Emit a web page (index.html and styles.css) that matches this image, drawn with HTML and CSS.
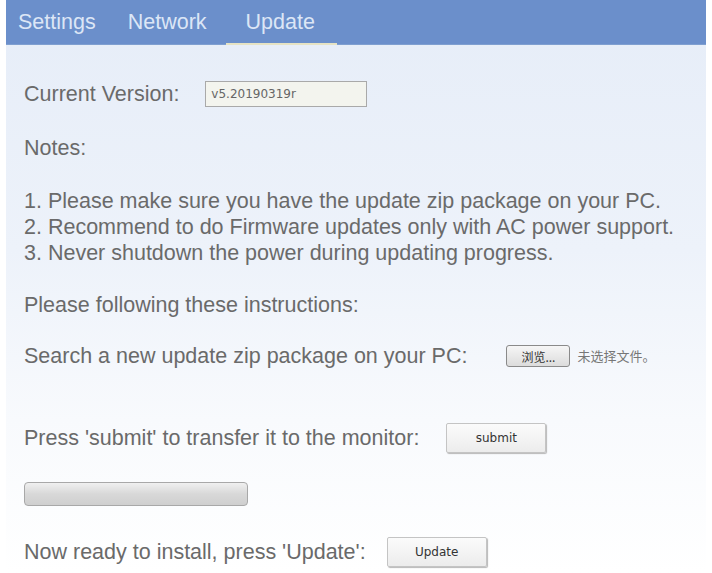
FILE: index.html
```html
<!DOCTYPE html>
<html lang="en">
<head>
    <meta charset="UTF-8">
    <meta name="viewport" content="width=device-width, initial-scale=1.0">
    <title>Update</title>
    <link rel="stylesheet" href="styles.css">
</head>
<body>
<div class="panel">
    <div class="tabs">
        <a href="#" class="tab">Settings</a>
        <a href="#" class="tab">Network</a>
        <a href="#" class="tab active">Update</a>
    </div>
    <div class="content">
        <div class="row version-row">
            <span>Current Version:</span>
            <input class="version" type="text" value="v5.20190319r" readonly>
        </div>
        <p class="notes-title">Notes:</p>
        <ol class="notes">
            <li>1. Please make sure you have the update zip package on your PC.</li>
            <li>2. Recommend to do Firmware updates only with AC power support.</li>
            <li>3. Never shutdown the power during updating progress.</li>
        </ol>
        <p class="instr">Please following these instructions:</p>
        <div class="row search-row">
            <span>Search a new update zip package on your PC:</span>
            <span class="file-pick">
                <button class="browse">浏览...</button>
                <span class="no-file">未选择文件。</span>
            </span>
        </div>
        <div class="row submit-row">
            <span>Press 'submit' to transfer it to the monitor:</span>
            <button class="btn submit">submit</button>
        </div>
        <div class="progress"></div>
        <div class="row update-row">
            <span>Now ready to install, press 'Update':</span>
            <button class="btn update">Update</button>
        </div>
    </div>
</div>
</body>
</html>
```

FILE: styles.css
```css
body {
    margin: 0;
    background: #ffffff;
    font-family: "Liberation Sans", Arial, sans-serif;
}
.panel {
    margin: 0 6px;
    height: 573px;
    background: linear-gradient(to bottom, #e6edf8 0px, #edf2fa 250px, #f8fafd 420px, #ffffff 573px);
}
.tabs {
    height: 44px;
    background-color: #6b8fcb;
    display: flex;
    padding-left: 12px;
    border-bottom: 1px solid #7f9fd0;
}
.tab {
    color: #dce6f6;
    text-decoration: none;
    font-size: 21.5px;
    line-height: 44px;
    margin-right: 32px;
}
.tab.active {
    padding: 0 22px 0 20px;
    margin-left: -13px;
    border-bottom: 2px solid #e6e3c4;
    height: 43px;
}
.content {
    padding: 36px 0 0 18px;
    color: #6a6a6a;
    font-size: 21.5px;
    line-height: 26px;
}
.row {
    display: flex;
    align-items: center;
}
.version-row span {
    margin-right: 26px;
}
.version {
    width: 150px;
    height: 22px;
    padding: 1px 5px;
    border: 1px solid #a9a9a9;
    background: #f3f4ee;
    color: #666;
    font-family: "DejaVu Sans", sans-serif;
    font-size: 12px;
}
.notes-title {
    margin: 28px 0 0;
}
.notes {
    list-style: none;
    margin: 27px 0 0;
    padding: 0;
}
.instr {
    margin: 26px 0 0;
}
.search-row {
    margin-top: 25px;
}
.file-pick {
    margin-left: 39px;
    display: flex;
    align-items: center;
}
.browse {
    width: 64px;
    height: 22px;
    padding: 0;
    border: 1px solid #8a8a8a;
    border-radius: 3px;
    background: linear-gradient(#f6f6f6, #dcdcdc);
    color: #333;
    font-family: "Noto Sans CJK SC", sans-serif;
    font-size: 12px;
}
.no-file {
    margin-left: 7px;
    font-family: "Noto Sans CJK SC", sans-serif;
    font-size: 13px;
    color: #777;
}
.submit-row {
    margin-top: 54px;
}
.btn {
    width: 100px;
    height: 30px;
    border: 1px solid #c4c4c4;
    border-radius: 2px;
    background: linear-gradient(#fbfbfb, #ececec);
    box-shadow: 1px 1px 1px #b8b8b8;
    color: #333;
    font-family: "DejaVu Sans", sans-serif;
    font-size: 12px;
}
.submit {
    margin-left: 27px;
}
.progress {
    width: 224px;
    height: 24px;
    margin: 29px 0 0;
    border: 1px solid #a8a8a8;
    border-radius: 4px;
    background: linear-gradient(#f0f0f0, #d8d8d8 50%, #cfcfcf);
    box-sizing: border-box;
}
.update-row {
    margin-top: 31px;
}
.update {
    margin-left: 21px;
}
```
